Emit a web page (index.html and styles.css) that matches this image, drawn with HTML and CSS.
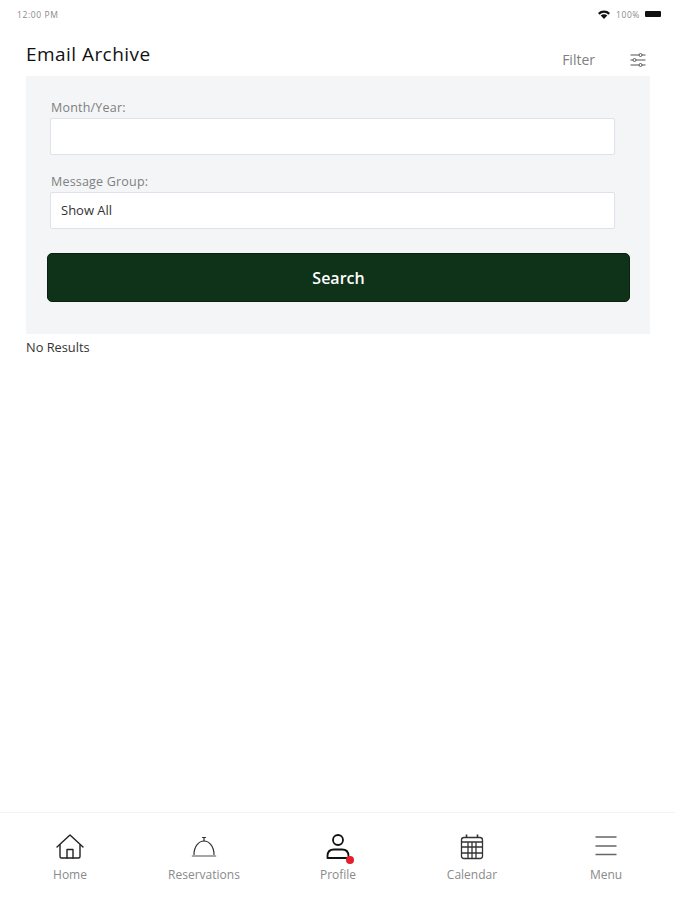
FILE: index.html
```html
<!DOCTYPE html>
<html lang="en">
<head>
    <meta charset="UTF-8">
    <meta name="viewport" content="width=device-width, initial-scale=1.0">
    <title>Email Archive</title>
    <link rel="stylesheet" href="styles.css">
</head>
<body>
    <div class="status-bar">
        <span>12:00 PM</span>
        <div class="status-right">
            <svg class="wifi" width="12" height="9" viewBox="0 0 12 9">
                <path d="M0 3 A8.5 8.5 0 0 1 12 3 L10.4 4.7 A6.2 6.2 0 0 0 1.6 4.7 Z" fill="#111"/>
                <path d="M2.7 5.6 A4.6 4.6 0 0 1 9.3 5.6 L6 9 Z" fill="#111"/>
            </svg>
            <span>100%</span>
            <div class="battery"></div>
        </div>
    </div>

    <header class="page-header">
        <h1>Email Archive</h1>
        <div class="filter">
            <span>Filter</span>
            <svg width="16" height="16" viewBox="0 0 16 16" fill="none" stroke="#555" stroke-width="1">
                <path d="M0.5 3h8.500M12 3h3.500M0.500 8h2.500M6 8h9.500M0.500 13h8.500M12 13h3.500"/>
                <circle cx="10.500" cy="3" r="1.500"/>
                <circle cx="4.500" cy="8" r="1.500"/>
                <circle cx="10.500" cy="13" r="1.500"/>
            </svg>
        </div>
    </header>

    <section class="search-panel">
        <div class="field">
            <label>Month/Year:</label>
            <div class="input"></div>
        </div>
        <div class="field">
            <label>Message Group:</label>
            <div class="input">Show All</div>
        </div>
        <button class="search-btn">Search</button>
    </section>

    <p class="no-results">No Results</p>

    <nav class="tab-bar">
        <div class="tab">
            <svg width="30" height="28" viewBox="0 0 30 28" fill="none" stroke="#222" stroke-width="1.400" stroke-linejoin="round" stroke-linecap="round">
                <path d="M2 14 L15 2 L28 14"/>
                <path d="M5 12 V23.500 Q5 25 6.500 25 H23.500 Q25 25 25 23.500 V12"/>
                <path d="M12 25 V16.500 H18 V25"/>
            </svg>
            <span>Home</span>
        </div>
        <div class="tab">
            <svg width="30" height="28" viewBox="0 0 30 28" fill="none" stroke="#333" stroke-width="1.200" stroke-linecap="round">
                <path d="M13.500 4.500 H16.500 M15 4.500 V8"/>
                <path d="M5 21.500 C5 13 10 8 15 8 C20 8 25 13 25 21.500"/>
                <path d="M3.500 23 H26.500" stroke="#888" stroke-width="1.600"/>
            </svg>
            <span>Reservations</span>
        </div>
        <div class="tab">
            <div class="profile-icon">
                <svg width="30" height="28" viewBox="0 0 30 28" fill="none" stroke="#111" stroke-width="1.800">
                    <circle cx="15" cy="7" r="5"/>
                    <path d="M4.500 25 V23 Q4.500 16.500 11 16.500 H19 Q25.500 16.500 25.500 23 V25 Z" stroke-linejoin="round"/>
                </svg>
                <div class="badge"></div>
            </div>
            <span>Profile</span>
        </div>
        <div class="tab">
            <svg width="30" height="28" viewBox="0 0 30 28" fill="none" stroke="#333" stroke-width="1.300">
                <rect x="4.500" y="4.500" width="21" height="21" rx="2.500"/>
                <path d="M9.500 1.500 V5 M20.500 1.500 V5" stroke-width="1.600"/>
                <path d="M4.500 9 H25.500 M4.500 14 H25.500 M4.500 20 H25.500 M11 9 V25.500 M15 9 V25.500 M19 9 V25.500"/>
            </svg>
            <span>Calendar</span>
        </div>
        <div class="tab">
            <svg width="30" height="28" viewBox="0 0 30 28" fill="none" stroke="#666" stroke-width="1.500">
                <path d="M4.500 4 H25.500 M4.500 13 H25.500 M4.500 21.500 H25.500"/>
            </svg>
            <span>Menu</span>
        </div>
    </nav>
</body>
</html>
```

FILE: styles.css
```css
body {
    margin: 0;
    width: 675px;
    height: 900px;
    display: flex;
    flex-direction: column;
    font-family: "Open Sans", sans-serif;
    background: #fff;
    color: #222;
    overflow: hidden;
}

.status-bar {
    height: 28px;
    padding: 0 14px 0 17px;
    display: flex;
    align-items: center;
    justify-content: space-between;
    font-size: 8.500px;
    letter-spacing: 0.600px;
    color: #8a8a8a;
}

.status-right {
    display: flex;
    align-items: center;
    gap: 5px;
}

.status-right .wifi {
    margin-right: 1px;
}

.battery {
    width: 16px;
    height: 6px;
    background: #111;
    border-radius: 1px;
}

.page-header {
    height: 48px;
    margin: 0 29px 0 26px;
    display: flex;
    align-items: center;
    justify-content: space-between;
}

.page-header h1 {
    margin: 3px 0 0;
    font-size: 19px;
    font-weight: 400;
    letter-spacing: 0.450px;
    color: #111;
}

.filter {
    display: flex;
    align-items: center;
    gap: 35px;
    padding-top: 15px;
    font-size: 14px;
    color: #808080;
}

.search-panel {
    margin: 0 25px 0 26px;
    height: 258px;
    box-sizing: border-box;
    padding: 22px 20px 0 21px;
    background: #f3f5f7;
}

.field {
    margin: 0 15px 0 3px;
    height: 74px;
}

.field label {
    display: block;
    height: 20px;
    padding-left: 1px;
    font-size: 12.500px;
    letter-spacing: 0.200px;
    line-height: 20px;
    color: #808080;
}

.input {
    height: 37px;
    box-sizing: border-box;
    padding-left: 10px;
    background: #fff;
    border: 1px solid #dfe2ea;
    border-radius: 2px;
    font-size: 13px;
    line-height: 35px;
    color: #333;
}

.search-btn {
    display: block;
    width: 100%;
    height: 49px;
    margin-top: 7px;
    background: #0f3319;
    border: 1px solid #0a2010;
    border-radius: 5px;
    color: #fff;
    font-family: inherit;
    font-size: 16px;
    font-weight: 600;
}

.no-results {
    margin: 5px 0 0 26px;
    font-size: 12.800px;
    line-height: 16px;
    color: #333;
    flex: 1;
}

.tab-bar {
    height: 87px;
    display: flex;
    justify-content: center;
    padding-left: 1px;
    border-top: 1px solid #f4f4f4;
}

.tab {
    width: 134px;
    padding-top: 20px;
    display: flex;
    flex-direction: column;
    align-items: center;
    font-size: 12px;
    line-height: 16px;
    color: #8a8a8a;
}

.tab svg {
    display: block;
    margin-bottom: 6px;
}

.profile-icon {
    position: relative;
}

.badge {
    position: absolute;
    right: -1px;
    bottom: 3px;
    width: 8px;
    height: 8px;
    background: #e2202c;
    border-radius: 50%;
}
```
